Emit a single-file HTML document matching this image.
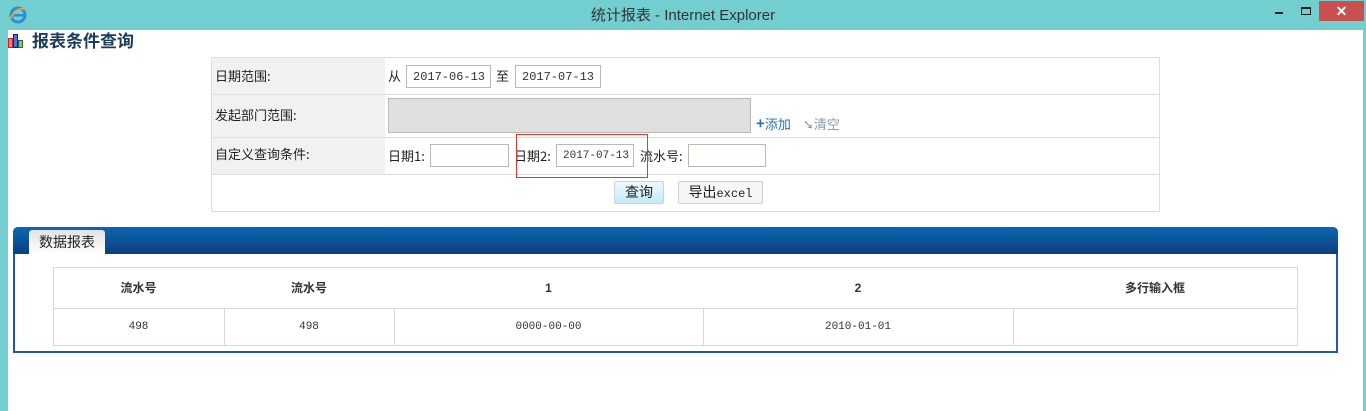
<!DOCTYPE html>
<html><head><meta charset="utf-8"><style>
*{margin:0;padding:0;box-sizing:border-box}
body{width:1366px;height:411px;background:#73cfcf;font-family:"Liberation Sans","Noto Sans CJK SC",sans-serif;font-size:12px;color:#222;position:relative;overflow:hidden}
.abs{position:absolute}
.content{left:8px;top:30px;width:1355px;height:381px;background:#fff}
.title{left:0;top:0;width:1366px;height:30px;text-align:center;line-height:32px;font-size:15px;color:#333}
.inp{position:absolute;height:23px;border:1px solid #bdb9b1;background:#fff;font-family:"Liberation Mono",monospace;font-size:12px;line-height:22px;padding-left:6px;color:#333}
.lbl{position:absolute;font-size:13px;line-height:16px;font-family:"Noto Sans CJK SC","Liberation Sans",sans-serif}
.hl{position:absolute;height:1px;background:#dedede}
.vl{position:absolute;width:1px;background:#d8d8d8}
.c{position:absolute;text-align:center;line-height:16px}
</style></head><body>
<div class="abs title">统计报表 - Internet Explorer</div>
<svg class="abs" style="left:8px;top:5px" width="20" height="20" viewBox="0 0 20 20"><circle cx="10" cy="10" r="7" fill="none" stroke="#2a8fd8" stroke-width="3"/><rect x="4" y="9" width="12" height="2.5" fill="#2a8fd8"/><path d="M2 14 Q10 0 18 5" stroke="#e8b020" stroke-width="1.6" fill="none"/></svg>
<div class="abs" style="left:1275px;top:12px;width:8px;height:2px;background:#222"></div>
<div class="abs" style="left:1301px;top:7px;width:10px;height:8px;border:1px solid #222;border-top-width:2px"></div>
<div class="abs" style="left:1319px;top:1px;width:45px;height:20px;background:#c9504e;color:#fff;text-align:center;font-size:14px;line-height:20px;font-weight:bold">✕</div>
<div class="abs content"></div>
<svg class="abs" style="left:8px;top:34px" width="16" height="14"><rect x="0.5" y="4.5" width="4" height="9" fill="#f77" stroke="#c22"/><rect x="5.5" y="0.5" width="4" height="13" fill="#47f" stroke="#124"/><rect x="10.5" y="6.5" width="4" height="7" fill="#7c7" stroke="#363"/></svg>
<div class="abs" style="left:32px;top:30px;font-size:17px;line-height:20px;font-weight:bold;color:#1d3c5a;font-family:'Noto Sans CJK SC',sans-serif">报表条件查询</div>

<div class="abs" style="left:211px;top:57px;width:949px;height:155px;border:1px solid #dedede"></div>
<div class="abs" style="left:212px;top:58px;width:173px;height:116px;background:#f1f1f1"></div>
<div class="hl" style="left:211px;top:94px;width:949px"></div>
<div class="hl" style="left:211px;top:137px;width:949px"></div>
<div class="hl" style="left:211px;top:174px;width:949px"></div>
<div class="lbl" style="left:215px;top:68px">日期范围:</div>
<div class="lbl" style="left:215px;top:107px">发起部门范围:</div>
<div class="lbl" style="left:215px;top:146px">自定义查询条件:</div>
<div class="lbl" style="left:388px;top:68px">从</div>
<div class="inp" style="left:406px;top:65px;width:85px">2017-06-13</div>
<div class="lbl" style="left:496px;top:68px">至</div>
<div class="inp" style="left:515px;top:65px;width:86px">2017-07-13</div>
<div class="abs" style="left:388px;top:98px;width:363px;height:35px;background:#e0e0e0;border:1px solid #bdb9b1"></div>
<div class="lbl" style="left:756px;top:116px;color:#2a6fbf"><b style="font-size:15px">+</b>添加</div>
<div class="lbl" style="left:803px;top:116px;color:#8a98a8">➘清空</div>
<div class="lbl" style="left:388px;top:148px">日期1:</div>
<div class="inp" style="left:430px;top:144px;width:79px"></div>
<div class="lbl" style="left:514px;top:148px">日期2:</div>
<div class="inp" style="left:556px;top:144px;width:78px;font-size:11px">2017-07-13</div>
<div class="lbl" style="left:640px;top:148px">流水号:</div>
<div class="inp" style="left:688px;top:144px;width:78px"></div>
<div class="abs" style="left:516px;top:134px;width:132px;height:44px;border:1px solid #e33"></div>
<div class="abs" style="left:614px;top:181px;width:50px;height:23px;border:1px solid #d0d0d0;border-radius:2px;background:linear-gradient(#eef8fc,#c5eaf8);text-align:center;line-height:21px;font-size:14px">查询</div>
<div class="abs" style="left:678px;top:181px;width:85px;height:23px;border:1px solid #d0d0d0;border-radius:2px;background:#f6f6f6;text-align:center;line-height:21px;font-size:14px">导出<span style="font-family:'Liberation Mono';font-size:12px">excel</span></div>

<div class="abs" style="left:13px;top:227px;width:1325px;height:126px;border:2px solid #1d5aa8;border-top:0;border-radius:5px 5px 0 0;background:#fff"></div>
<div class="abs" style="left:13px;top:227px;width:1325px;height:27px;border-radius:5px 5px 0 0;background:linear-gradient(#0a68b0,#0d3e80)"></div>
<div class="abs" style="left:29px;top:230px;width:76px;height:24px;background:linear-gradient(#e2e2e2,#fff);border-radius:3px 3px 0 0;text-align:center;line-height:24px;font-size:14px">数据报表</div>
<div class="abs" style="left:53px;top:267px;width:1245px;height:79px;border:1px solid #d8d8d8"></div>
<div class="hl" style="left:53px;top:308px;width:1245px;background:#d8d8d8"></div>
<div class="vl" style="left:224px;top:308px;height:38px"></div>
<div class="vl" style="left:394px;top:308px;height:38px"></div>
<div class="vl" style="left:703px;top:308px;height:38px"></div>
<div class="vl" style="left:1013px;top:308px;height:38px"></div>
<div class="abs" style="left:53px;top:280px;width:1245px;font-weight:bold;font-size:12px;color:#333">
<span class="c" style="left:0;width:171px">流水号</span>
<span class="c" style="left:171px;width:170px">流水号</span>
<span class="c" style="left:341px;width:309px">1</span>
<span class="c" style="left:650px;width:310px">2</span>
<span class="c" style="left:960px;width:284px">多行输入框</span></div>
<div class="abs" style="left:53px;top:319px;width:1245px;font-family:'Liberation Mono',monospace;font-size:11px;color:#333">
<span class="c" style="left:0;width:171px">498</span>
<span class="c" style="left:171px;width:170px">498</span>
<span class="c" style="left:341px;width:309px">0000-00-00</span>
<span class="c" style="left:650px;width:310px">2010-01-01</span></div>
</body></html>
